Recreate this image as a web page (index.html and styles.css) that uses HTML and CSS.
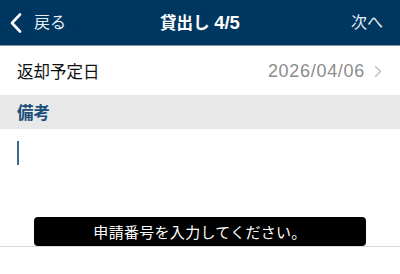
FILE: index.html
```html
<!DOCTYPE html>
<html lang="ja">
<head>
<meta charset="utf-8">
<link rel="stylesheet" href="styles.css">
</head>
<body>
<div class="screen">
  <header class="nav">
    <div class="nav-left">
      <svg class="back" width="12" height="20" viewBox="0 0 12 20"><path d="M10 1.5 L2 10 L10 18.5" fill="none" stroke="#fff" stroke-width="2.6" stroke-linecap="round" stroke-linejoin="round"/></svg>
      <span class="nav-text">戻る</span>
    </div>
    <div class="nav-title">貸出し <span class="nav-num">4/5</span></div>
    <div class="nav-right"><span class="nav-text">次へ</span></div>
  </header>
  <div class="row">
    <span class="row-label">返却予定日</span>
    <span class="row-value">2026/04/06
      <svg class="chev" width="8" height="13" viewBox="0 0 8 13"><path d="M1.5 1.5 L6.5 6.5 L1.5 11.5" fill="none" stroke="#c4c4c4" stroke-width="1.6" stroke-linecap="round" stroke-linejoin="round"/></svg>
    </span>
  </div>
  <div class="section">備考</div>
  <div class="memo">
    <div class="cursor"></div>
    <div class="toast">申請番号を入力してください。</div>
  </div>
</div>
</body>
</html>
```
FILE: styles.css
```css
* { box-sizing: border-box; }
html, body { margin: 0; padding: 0; background: #fff; }
body { font-family: "Liberation Sans", "Noto Sans CJK JP", sans-serif; }
.screen { width: 400px; height: 274px; overflow: hidden; }
.nav {
  height: 46px;
  background: #003761;
  border-bottom: 1px solid #7f98ad;
  display: grid;
  grid-template-columns: 1fr auto 1fr;
  align-items: center;
  color: #fff;
}
.nav-left { display: flex; align-items: center; padding-left: 10px; gap: 12px; }
.back { display: block; }
.nav-text { font-size: 16px; line-height: 20px; color: #e6edf3; }
.nav-title { font-size: 16.5px; font-weight: bold; line-height: 20px; }
.nav-num { font-size: 18.5px; }
.nav-right { display: flex; justify-content: flex-end; padding-right: 17px; }
.row {
  height: 49px;
  display: flex;
  align-items: center;
  justify-content: space-between;
  padding: 1px 18px 0 17px;
}
.row-label { font-size: 16.5px; color: #111; }
.row-value {
  font-size: 18px;
  letter-spacing: 0.7px;
  color: #8c8c8c;
  display: flex;
  align-items: center;
  gap: 9px;
}
.chev { display: block; }
.section {
  height: 34px;
  background: #e8e8e8;
  display: flex;
  align-items: center;
  padding-left: 17px;
  font-size: 16.5px;
  font-weight: bold;
  color: #1c4e7c;
}
.memo {
  height: 118px;
  border-bottom: 1px solid #d9d9d9;
  display: flex;
  flex-direction: column;
  align-items: flex-start;
  padding-top: 12px;
}
.cursor { width: 2px; height: 24px; background: #3e6890; margin-left: 17px; }
.toast {
  margin: 52px 0 0 34px;
  width: 332px;
  height: 29px;
  background: #000;
  border-radius: 4px;
  color: #fff;
  font-size: 15px;
  display: flex;
  align-items: center;
  justify-content: center;
  letter-spacing: 0.3px;
}
```
